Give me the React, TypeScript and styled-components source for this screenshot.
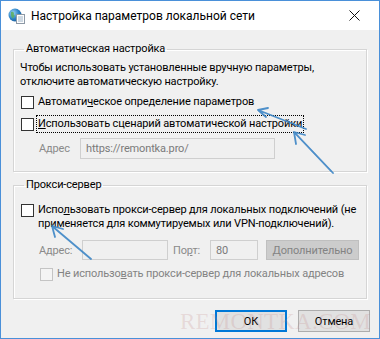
import React from "react";
import styled, { createGlobalStyle } from "styled-components";

const Global = createGlobalStyle`
  html, body { margin: 0; padding: 0; background: #f0f0f0; }
  body { font-family: Roboto, "Noto Sans", sans-serif; font-size: 11px; letter-spacing: -0.15px; color: #000; }
  * { box-sizing: border-box; }
`;

const Window = styled.div`
  position: relative;
  width: 380px;
  height: 339px;
  border: 1px solid #4a90d9;
  display: flex;
  flex-direction: column;
  background: #f0f0f0;
  overflow: hidden;
`;

const TitleBar = styled.div`
  height: 29px;
  background: #fff;
  display: flex;
  align-items: center;
  padding: 0 0 0 7px;
  flex-shrink: 0;
`;

const Title = styled.div`
  margin-left: 6px;
  font-size: 12px;
  letter-spacing: 0;
  flex: 1;
  white-space: nowrap;
`;

const Close = styled.div`
  width: 46px;
  height: 29px;
  display: flex;
  align-items: center;
  justify-content: center;
  margin-right: 2px;
`;

const Client = styled.div`
  flex: 1;
  padding: 11px 9px 0 12px;
  display: flex;
  flex-direction: column;
`;

const Group = styled.fieldset<{ $pb: number }>`
  margin: 0 3px 0 0;
  padding: 4px 6px ${(p) => p.$pb}px 6px;
  border: 1px solid #d5d5d5;
  box-shadow: inset 1px 1px 0 #fff, 1px 1px 0 #fff;
  min-width: 0;
  & + & { margin-top: 5px; }
`;

const Legend = styled.legend`
  padding: 0 2px;
  margin-left: 4px;
  line-height: 16px;
`;

const Text = styled.div`
  line-height: 14px;
  white-space: nowrap;
`;

const Row = styled.div<{ $mt: number; $indent?: number }>`
  display: flex;
  align-items: flex-start;
  margin-top: ${(p) => p.$mt}px;
  padding-left: ${(p) => p.$indent ?? 0}px;
`;

const Box = styled.span<{ $disabled?: boolean }>`
  width: 13px;
  height: 13px;
  flex-shrink: 0;
  margin: 1px 4px 0 1px;
  border: 1px solid ${(p) => (p.$disabled ? "#c4c4c4" : "#333")};
  background: ${(p) => (p.$disabled ? "#f4f4f4" : "#fff")};
`;

const Label = styled.span<{ $disabled?: boolean; $focus?: boolean }>`
  line-height: 14px;
  color: ${(p) => (p.$disabled ? "#838383" : "#000")};
  white-space: nowrap;
  ${(p) => (p.$focus ? "outline: 1px dotted #000; outline-offset: 1px;" : "")}
`;

const U = styled.span`
  text-decoration: underline;
`;

const FieldRow = styled.div<{ $mt: number }>`
  display: flex;
  align-items: center;
  margin-top: ${(p) => p.$mt}px;
  padding-left: 19px;
`;

const FieldLabel = styled.span<{ $w: number; $ml?: number }>`
  color: #8a8a8a;
  width: ${(p) => p.$w}px;
  margin-left: ${(p) => p.$ml ?? 0}px;
  flex-shrink: 0;
`;

const Input = styled.div<{ $w: number; $h: number }>`
  width: ${(p) => p.$w}px;
  height: ${(p) => p.$h}px;
  border: 1px solid #cfcfcf;
  background: #f0f0f0;
  color: #7a7a7a;
  padding-left: 5px;
  display: flex;
  align-items: center;
  flex-shrink: 0;
`;

const DisabledButton = styled.div`
  margin-left: 8px;
  width: 93px;
  height: 20px;
  background: #cccccc;
  border: 1px solid #bfbfbf;
  color: #838383;
  display: flex;
  align-items: center;
  justify-content: center;
`;

const Buttons = styled.div`
  display: flex;
  justify-content: flex-end;
  gap: 11px;
  margin-top: 11px;
`;

const Button = styled.div<{ $default?: boolean }>`
  width: 72px;
  height: 22px;
  display: flex;
  align-items: center;
  justify-content: center;
  background: #e1e1e1;
  border: 1px solid ${(p) => (p.$default ? "#0078d7" : "#adadad")};
  box-shadow: ${(p) => (p.$default ? "inset 0 0 0 1px #0078d7" : "none")};
`;

const Watermark = styled.div`
  position: absolute;
  left: 179px;
  top: 308px;
  font-family: "Liberation Serif", serif;
  font-size: 23px;
  line-height: 26px;
  letter-spacing: 0.2px;
  color: rgba(190, 120, 120, 0.2);
  pointer-events: none;
  white-space: nowrap;
`;

const Arrows = styled.svg`
  position: absolute;
  left: 0;
  top: 0;
  pointer-events: none;
`;

const NetIcon = () => (
  <svg width="17" height="16" viewBox="0 0 17 16">
    <defs>
      <radialGradient id="g" cx="35%" cy="35%" r="70%">
        <stop offset="0" stopColor="#9fd3f5" />
        <stop offset="0.6" stopColor="#2f86c9" />
        <stop offset="1" stopColor="#1b5e9c" />
      </radialGradient>
    </defs>
    <circle cx="7" cy="7" r="6.5" fill="url(#g)" />
    <path d="M3 4 q2 -1 3 1 q-1 2 1 3 q-2 1 -2 3 q-2 -2 -2 -4z" fill="#5cae5a" opacity="0.85" />
    <rect x="8.5" y="6.5" width="8" height="9" fill="#fdfdfd" stroke="#8d99a6" />
    <line x1="10" y1="9" x2="15" y2="9" stroke="#9fb4c8" />
    <line x1="10" y1="11" x2="15" y2="11" stroke="#9fb4c8" />
    <line x1="10" y1="13" x2="15" y2="13" stroke="#9fb4c8" />
  </svg>
);

const CloseIcon = () => (
  <svg width="11" height="11" viewBox="0 0 11 11">
    <path d="M0.5 0.5 L10.5 10.5 M10.5 0.5 L0.5 10.5" stroke="#111" strokeWidth="1" />
  </svg>
);

export default function App() {
  return (
    <>
      <Global />
      <Window>
        <TitleBar>
          <NetIcon />
          <Title>Настройка параметров локальной сети</Title>
          <Close>
            <CloseIcon />
          </Close>
        </TitleBar>
        <Client>
          <Group $pb={12}>
            <Legend>Автоматическая настройка</Legend>
            <Text>Чтобы использовать установленные вручную параметры,</Text>
            <Text>отключите автоматическую настройку.</Text>
            <Row $mt={6}>
              <Box />
              <Label>
                Автомати<U>ч</U>еское определение параметров
              </Label>
            </Row>
            <Row $mt={8}>
              <Box />
              <Label $focus>
                <U>И</U>спользовать сценарий автоматической настройки
              </Label>
            </Row>
            <FieldRow $mt={7}>
              <FieldLabel $w={41}>Адрес</FieldLabel>
              <Input $w={195} $h={21}>https://remontka.pro/</Input>
            </FieldRow>
          </Group>
          <Group $pb={17}>
            <Legend>Прокси-сервер</Legend>
            <Row $mt={6}>
              <Box />
              <Label>
                Испо<U>л</U>ьзовать прокси-сервер для локальных подключений (не
                <br />
                применяется для коммутируемых или VPN-подключений).
              </Label>
            </Row>
            <FieldRow $mt={9}>
              <FieldLabel $w={43}>Адрес:</FieldLabel>
              <Input $w={86} $h={20} />
              <FieldLabel $w={37} $ml={5}>
                По<U>р</U>т:
              </FieldLabel>
              <Input $w={48} $h={20}>80</Input>
              <DisabledButton>
                <U>Д</U>ополнительно
              </DisabledButton>
            </FieldRow>
            <Row $mt={7} $indent={19}>
              <Box $disabled />
              <Label $disabled>
                Не использо<U>в</U>ать прокси-сервер для локальных адресов
              </Label>
            </Row>
          </Group>
          <Buttons>
            <Button $default>ОК</Button>
            <Button>Отмена</Button>
          </Buttons>
        </Client>
        <Watermark>REMONTKA.COM</Watermark>
        <Arrows width="380" height="339" viewBox="0 0 380 339">
          <g stroke="#3d86c6" strokeWidth="1.8" fill="none" strokeLinecap="round" strokeLinejoin="round" opacity="0.9">
            <path d="M332 172 L293 131 M293 131 L295 143 M293 131 L304 134" />
            <path d="M330 170 L295 133" opacity="0.6" />
            <path d="M305 128 L257 109 M257 109 L265 116 M257 109 L267 107" />
            <path d="M90 258 L51 225 M51 225 L54 236 M51 225 L62 228" />
          </g>
        </Arrows>
      </Window>
    </>
  );
}
